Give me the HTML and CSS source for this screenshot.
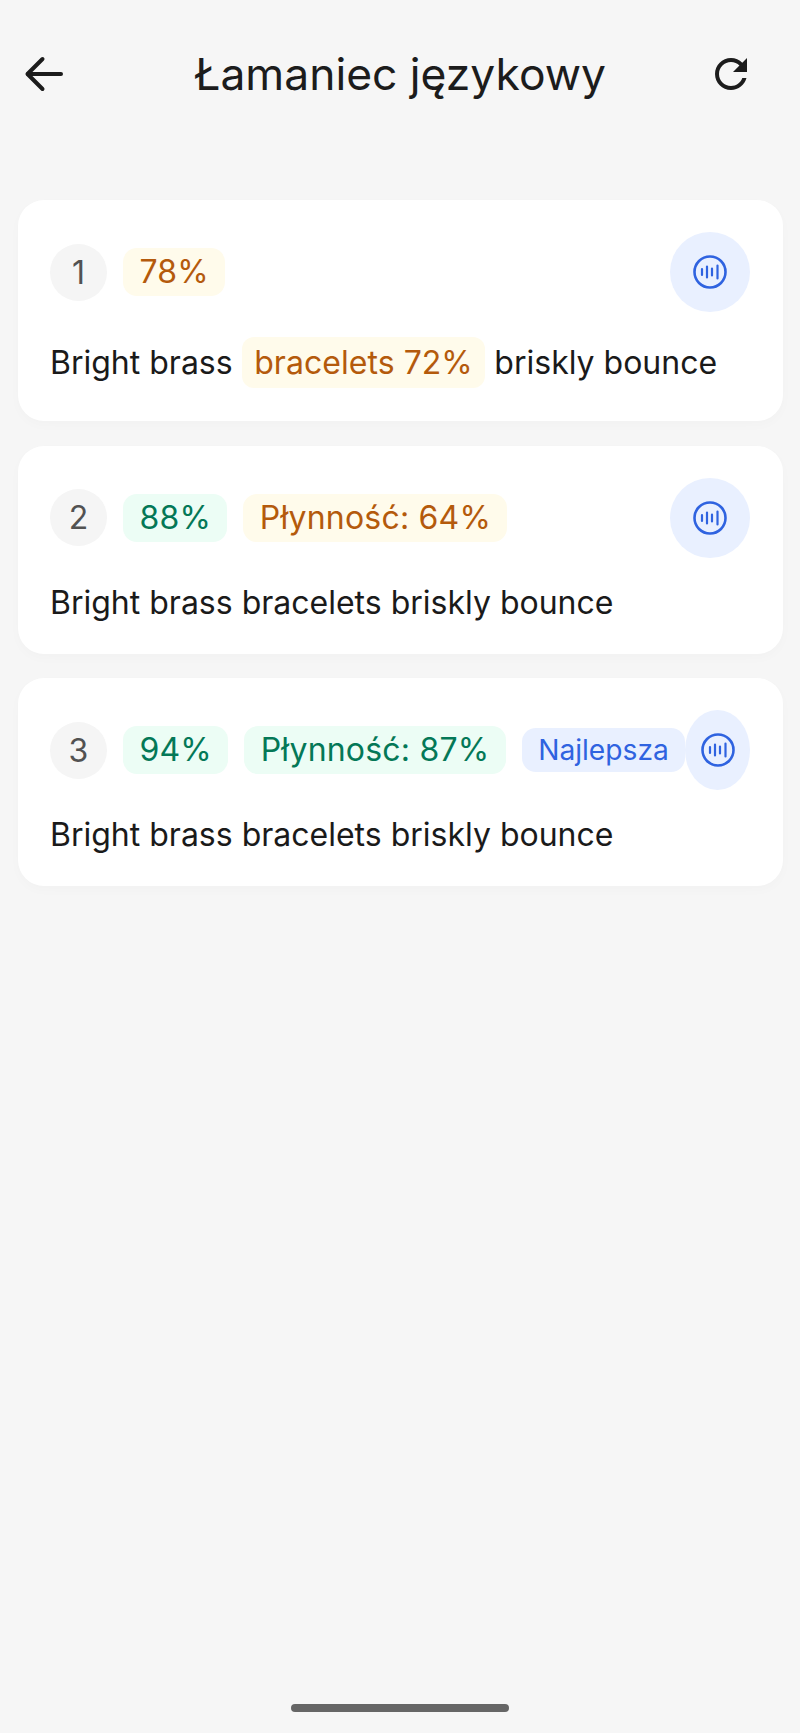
FILE: index.html
```html
<!DOCTYPE html>
<html lang="pl">
<head>
    <meta charset="UTF-8">
    <meta name="viewport" content="width=device-width, initial-scale=1.0">
    <title>Łamaniec językowy</title>
    <link rel="stylesheet" href="styles.css">
</head>
<body>
    <header class="header">
        <button class="icon-btn back-btn" aria-label="Wstecz">
            <svg width="48" height="48" viewBox="0 0 48 48" fill="none" stroke="#1c1c1c" stroke-width="4" stroke-linecap="round" stroke-linejoin="round">
                <path d="M41 24H8"/>
                <path d="M22.5 9L7.5 24l15 15"/>
            </svg>
        </button>
        <h1>Łamaniec językowy</h1>
        <button class="icon-btn refresh-btn" aria-label="Odśwież">
            <svg width="48" height="48" viewBox="0 0 24 24" fill="#1c1c1c">
                <path d="M17.65 6.35C16.2 4.9 14.21 4 12 4c-4.42 0-7.99 3.58-7.99 8s3.57 8 7.99 8c3.73 0 6.84-2.55 7.73-6h-2.08c-.82 2.33-3.04 4-5.65 4-3.31 0-6-2.69-6-6s2.69-6 6-6c1.66 0 3.14.69 4.22 1.78L13 11h7V4l-2.35 2.35z"/>
            </svg>
        </button>
    </header>

    <main class="list">
        <article class="card">
            <div class="card-top">
                <div class="tags">
                    <span class="number">1</span>
                    <span class="pill amber">78%</span>
                </div>
                <button class="play-btn" aria-label="Odtwórz">
                    <svg width="34" height="34" viewBox="0 0 34 34" fill="none" stroke="#2f63e0" stroke-width="2.2" stroke-linecap="round">
                        <circle cx="17" cy="17" r="15.5" stroke-width="2.6"/>
                        <path d="M9 14v6M14 11.5v11M19 13.5v7M24.5 10.5v13"/>
                    </svg>
                </button>
            </div>
            <p class="sentence">Bright brass <span class="word amber">bracelets 72%</span> briskly bounce</p>
        </article>

        <article class="card">
            <div class="card-top">
                <div class="tags">
                    <span class="number">2</span>
                    <span class="pill green">88%</span>
                    <span class="pill amber">Płynność: 64%</span>
                </div>
                <button class="play-btn" aria-label="Odtwórz">
                    <svg width="34" height="34" viewBox="0 0 34 34" fill="none" stroke="#2f63e0" stroke-width="2.2" stroke-linecap="round">
                        <circle cx="17" cy="17" r="15.5" stroke-width="2.6"/>
                        <path d="M9 14v6M14 11.5v11M19 13.5v7M24.5 10.5v13"/>
                    </svg>
                </button>
            </div>
            <p class="sentence">Bright brass bracelets briskly bounce</p>
        </article>

        <article class="card">
            <div class="card-top">
                <div class="tags">
                    <span class="number">3</span>
                    <span class="pill green">94%</span>
                    <span class="pill green">Płynność: 87%</span>
                    <span class="pill blue">Najlepsza</span>
                </div>
                <button class="play-btn" aria-label="Odtwórz">
                    <svg width="34" height="34" viewBox="0 0 34 34" fill="none" stroke="#2f63e0" stroke-width="2.2" stroke-linecap="round">
                        <circle cx="17" cy="17" r="15.5" stroke-width="2.6"/>
                        <path d="M9 14v6M14 11.5v11M19 13.5v7M24.5 10.5v13"/>
                    </svg>
                </button>
            </div>
            <p class="sentence">Bright brass bracelets briskly bounce</p>
        </article>
    </main>

    <div class="home-bar"></div>
</body>
</html>
```

FILE: styles.css
```css
* {
    box-sizing: border-box;
}

body {
    font-family: 'Inter', 'Noto Sans', sans-serif;
    background-color: #f6f6f6;
    color: #1a1a1a;
    display: flex;
    flex-direction: column;
    height: 100vh;
    margin: 0;
    overflow: hidden;
}

.header {
    display: grid;
    grid-template-columns: 1fr auto 1fr;
    align-items: center;
    padding: 50px 20px 0;
    margin-bottom: 102px;
}

.header h1 {
    margin: 0;
    font-size: 44.4px;
    line-height: 48px;
    font-weight: 400;
    color: #1c1c1c;
}

.icon-btn {
    width: 48px;
    height: 48px;
    padding: 0;
    border: none;
    background: none;
}

.icon-btn svg {
    display: block;
}

.refresh-btn {
    justify-self: end;
    margin-right: 25px;
}

.list {
    display: flex;
    flex-direction: column;
    gap: 24.5px;
    padding: 0 17px 0 18px;
}

.card {
    background: #fff;
    border-radius: 26px;
    padding: 32px 33px 29px 32px;
    box-shadow: 0 4px 12px rgba(0, 0, 0, 0.02);
}

.card-top {
    display: flex;
    align-items: center;
    justify-content: space-between;
}

.tags {
    display: flex;
    align-items: center;
    gap: 16px;
    flex-shrink: 0;
}

.number {
    width: 57px;
    height: 57px;
    border-radius: 50%;
    background: #f5f5f5;
    color: #525252;
    font-size: 32px;
    display: flex;
    align-items: center;
    justify-content: center;
}

.pill {
    font-size: 32px;
    line-height: 48px;
    letter-spacing: 0.2px;
    padding: 0 16.4px;
    border-radius: 14px;
}

.pill.blue {
    font-size: 28.2px;
    line-height: 44px;
    letter-spacing: 0;
}

.amber {
    background: #fffbeb;
    color: #b45a0c;
}

.green {
    background: #ecfdf5;
    color: #047857;
}

.blue {
    background: #e9f0ff;
    color: #2f63e0;
}

.play-btn {
    flex: 0 1 80px;
    height: 80px;
    min-width: 0;
    padding: 0;
    border: none;
    border-radius: 50%;
    background: #e9f0ff;
    display: flex;
    align-items: center;
    justify-content: center;
}

.play-btn svg {
    flex-shrink: 0;
}

.sentence {
    margin: 23px 0 0;
    font-size: 32px;
    line-height: 44px;
}

.word {
    display: inline-block;
    padding: 4px 12.5px 3px;
    border-radius: 12px;
    margin-top: 2px;
    margin-bottom: 4px;
    letter-spacing: 0.05px;
}

.home-bar {
    width: 218px;
    height: 8px;
    border-radius: 4px;
    background: #666;
    margin: auto auto 21px;
}
```
